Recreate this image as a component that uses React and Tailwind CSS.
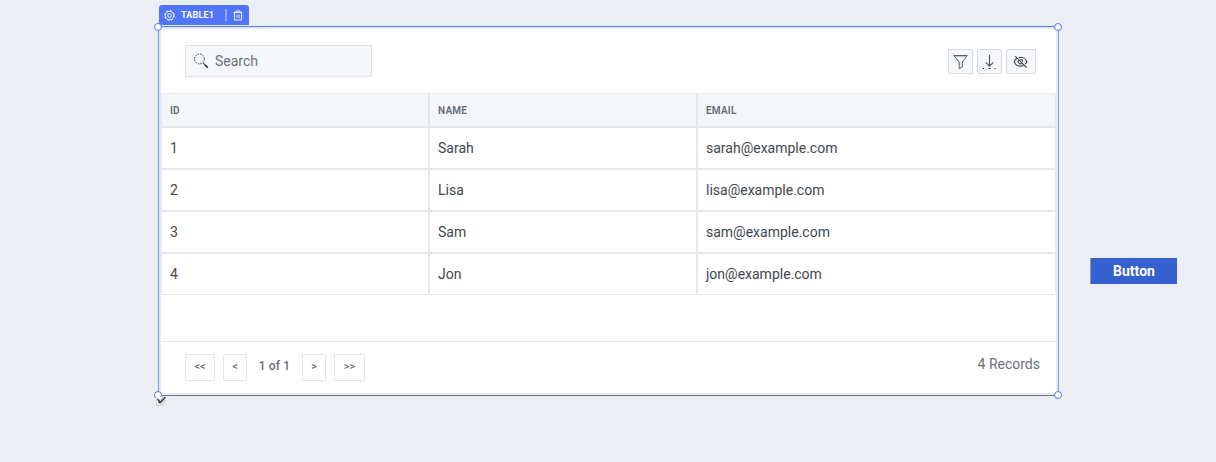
import React from "react";

const rows = [
  ["1", "Sarah", "sarah@example.com"],
  ["2", "Lisa", "lisa@example.com"],
  ["3", "Sam", "sam@example.com"],
  ["4", "Jon", "jon@example.com"],
];

function Gear() {
  return (
    <svg className="h-[11px] w-[11px]" viewBox="0 0 11 11" fill="none" stroke="white">
      <circle cx="5.500" cy="5.500" r="4.200" strokeWidth="0.900" />
      <circle cx="5.500" cy="5.500" r="4.900" strokeWidth="1" strokeDasharray="1.920 1.920" />
      <circle cx="5.500" cy="5.500" r="1.800" strokeWidth="1" />
    </svg>
  );
}

function Trash() {
  return (
    <svg className="h-[11px] w-[10px]" viewBox="0 0 10 11" fill="none" stroke="white" strokeWidth="0.900">
      <path d="M0.500 2.500h9M3 2.500v-1.500h4v1.500M1.500 2.500v7.500h7V2.500M4 4.500v3.500M6 4.500v3.500" />
    </svg>
  );
}

function SearchIcon() {
  return (
    <svg className="h-4 w-4" viewBox="0 0 16 16" fill="none" stroke="#222629">
      <circle cx="6.500" cy="6" r="4.900" strokeWidth="0.900" strokeDasharray="1.500 1.060" />
      <path d="M10 10l1.500 1" strokeWidth="1" />
      <path d="M11.300 11.300l3.500 3.300" strokeWidth="1.500" />
    </svg>
  );
}

function Funnel() {
  return (
    <svg className="h-4 w-4" viewBox="0 0 16 16" fill="none" stroke="#4b5055" strokeWidth="0.900">
      <path d="M0.700 1.500h13.600L9.300 8v5l-3.100 1.800V8z" />
      <path d="M1.500 2.400h12" strokeWidth="0.600" opacity="0.600" />
    </svg>
  );
}

function Download() {
  return (
    <svg className="h-4 w-4" viewBox="0 0 16 16" fill="none">
      <path d="M7.500 1v11M3.800 8.300l3.700 3.900 3.700-3.900" stroke="#4b5055" strokeWidth="1.100" />
      <path d="M1 14.500h1M6.500 14.500h2M12.500 14.500h1" stroke="#202326" strokeWidth="1" />
    </svg>
  );
}

function EyeOff() {
  return (
    <svg className="h-4 w-4" viewBox="0 0 16 16" fill="none" stroke="#41474c" strokeWidth="1.100">
      <path d="M3.800 4.300C2.400 5.200 1.600 6.600 1.200 7.700c1 2.600 3.300 4.400 6.300 4.400 1.200 0 2.200-.3 3.100-.7M5.800 3.600c3.700-.9 6.900 1.100 8 4.100-.4 1-1 1.800-1.800 2.500M5.500 6.300C4.700 8 5.800 9.900 7.500 9.900c.5 0 .9-.1 1.300-.3M7.200 5.500c1.400-.1 2.500.8 2.500 2.200" />
      <path d="M2.200 2.200l11.300 11.300" />
    </svg>
  );
}

const headers = ["ID", "NAME", "EMAIL"];
const corners = [
  "-left-[5px] -top-[4px]",
  "-right-[4px] -top-[4px]",
  "-left-[5px] -bottom-[4px]",
  "-right-[4px] -bottom-[4px]",
];
const toolButton = "flex h-[25px] items-center justify-center rounded-[2px] border border-[#d8dbdf] bg-[#f5f7fa]";
const pageButton = "flex h-[27px] items-center justify-center rounded-[1px] border border-[#e3e5ea] bg-white text-[11px] font-medium text-[#686e75]";

export default function App() {
  return (
    <main className="flex h-[462px] w-[1216px] items-start overflow-hidden bg-[#ebeff4] pl-[158px] font-['Roboto',sans-serif]">
      <section className="w-[900px] shrink-0 pt-[5px]">
        <div className="ml-px flex h-5 w-[90px] items-center rounded-t-[3px] bg-[#5075f8] pl-[5px] text-white">
          <Gear />
          <span className="ml-[6px] w-[44px] pt-px text-[9px] font-bold tracking-[0.200px]">TABLE1</span>
          <span className="h-3 w-[2px] bg-[#91a8fb]" />
          <span className="ml-[6px]"><Trash /></span>
        </div>
        <div className="relative mt-px h-[370px] w-[901px] border border-b-[#73777f] border-l-[#7892e6] border-r-[#8499e5] border-t-[#5377ed] bg-[#e4ebf8] p-[2px]">
          <div className="flex h-[364px] flex-col bg-white">
            <div className="flex h-16 items-start justify-between pl-6 pr-5 pt-4">
              <div className="flex h-8 w-[187px] items-center border border-[#dfe2e8] bg-[#f5f7fa] pl-[7px]">
                <SearchIcon />
                <span className="ml-[6px] text-[14px] text-[#6b7177]">Search</span>
              </div>
              <div className="mt-1 flex gap-1">
                <button className={`${toolButton} w-[25px]`}><Funnel /></button>
                <button className={`${toolButton} w-[25px]`}><Download /></button>
                <button className={`${toolButton} w-[30px]`}><EyeOff /></button>
              </div>
            </div>
            <table className="w-[895px] table-fixed border-separate border-spacing-0 border-l border-t border-[#e8e9ee]">
              <colgroup>
                <col className="w-[268px]" />
                <col className="w-[268px]" />
                <col />
              </colgroup>
              <thead>
                <tr className="h-[34px] bg-[#f5f6fa]">
                  {headers.map((header) => (
                    <th key={header} className="border-b-2 border-r-2 border-[#e6e7ec] p-0 pl-2 text-left text-[10px] font-semibold tracking-[0.220px] text-[#626970] last:border-r">{header}</th>
                  ))}
                </tr>
              </thead>
              <tbody>
                {rows.map((row) => (
                  <tr key={row[0]} className="group h-[42px] last:h-[41px]">
                    {row.map((cell) => (
                      <td key={cell} className="border-b-2 border-r-2 border-[#e6e7ec] p-0 pl-2 text-[14px] text-[#40484f] last:border-r group-last:border-b">{cell}</td>
                    ))}
                  </tr>
                ))}
              </tbody>
            </table>
            <footer className="mt-auto flex h-[52px] items-start justify-between border-t border-[#e6e7ec] pl-6 pr-4 pt-3">
              <div className="flex items-center">
                <button className={`${pageButton} w-[30px]`}>&lt;&lt;</button>
                <button className={`${pageButton} ml-2 w-6`}>&lt;</button>
                <span className="w-[55px] pb-[3px] text-center text-[12px] font-medium tracking-[0.100px] text-[#686e75]">1 of 1</span>
                <button className={`${pageButton} w-6`}>&gt;</button>
                <button className={`${pageButton} ml-2 w-[31px]`}>&gt;&gt;</button>
              </div>
              <span className="text-[14px] leading-[21px] text-[#6b7177]">4 Records</span>
            </footer>
          </div>
          {corners.map((corner) => (
            <span key={corner} className={`absolute h-2 w-2 rounded-full border border-[#5878df] bg-white ${corner}`} />
          ))}
          <svg className="absolute -bottom-[11px] -left-[3px] h-3 w-[10px]" viewBox="0 0 10 12" fill="none">
            <path d="M0 3h8v6l-2 3H0z" fill="#f5f5f6" />
            <path d="M0 3v8.500h6L9.500 6" stroke="#b4b6ba" strokeWidth="0.800" />
            <path d="M1.500 5l3 3.500M2.500 8.500h2L9.500 3" stroke="#2d3035" strokeWidth="1.300" />
            <path d="M3.500 7L7.500 3" stroke="#75787d" strokeWidth="0.700" />
          </svg>
        </div>
      </section>
      <button className="ml-8 mt-[258px] flex h-[26px] w-[87px] items-center justify-center border-l border-[#8b9ac5] bg-[#3560cf] text-[14px] font-bold text-white">Button</button>
    </main>
  );
}
